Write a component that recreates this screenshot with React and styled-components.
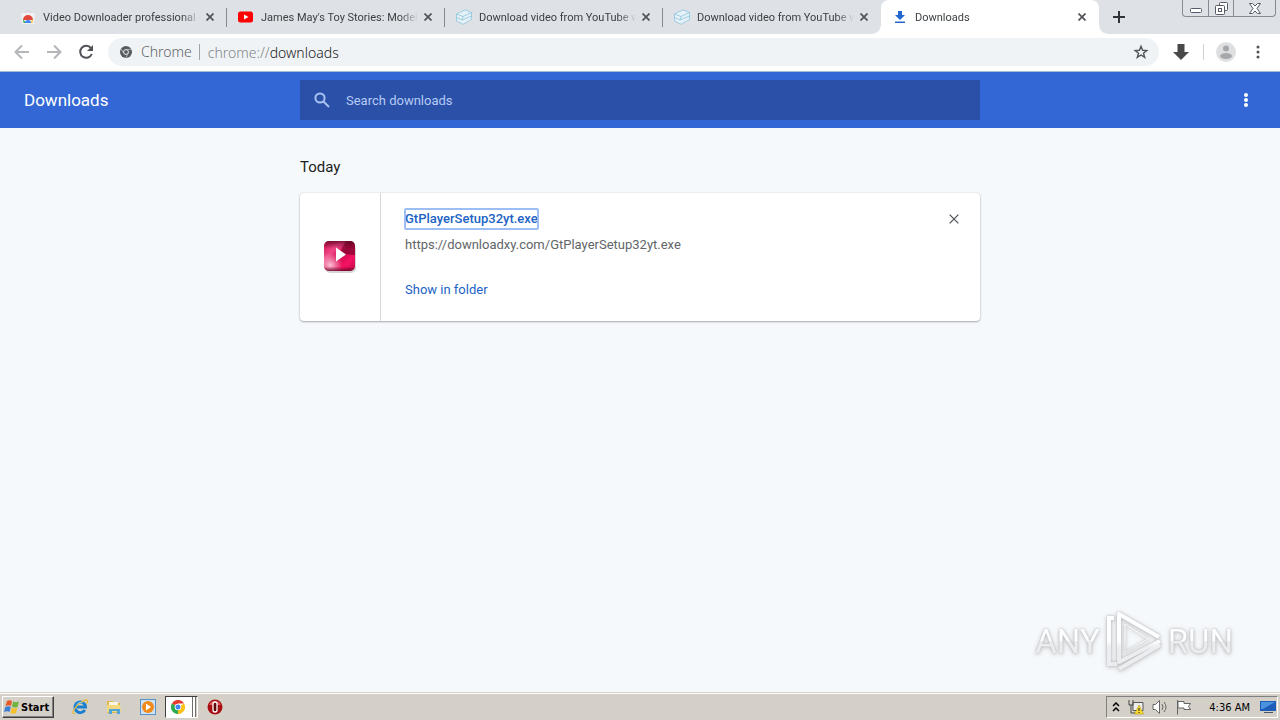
import React from 'react';
import styled, { createGlobalStyle, css } from 'styled-components';

// STYLES
const GlobalStyle = createGlobalStyle`
	* {
		box-sizing: border-box;
	}

	body {
		margin: 0;
		background: #f6f9fc;
		font-family: Roboto, 'Liberation Sans', sans-serif;
	}

	button,
	input {
		margin: 0;
		padding: 0;
		border: 0;
		background: none;
		color: inherit;
		font: inherit;
	}

	svg {
		display: block;
		flex: none;
	}
`;

const Screen = styled.div`
	display: flex;
	flex-direction: column;
	min-height: 100vh;
`;

// TAB STRIP
const TabStrip = styled.div`
	display: flex;
	height: 34px;
	padding-left: 9px;
	background: #dee1e6;
	font-size: 11px;
`;

const Tab = styled.div`
	position: relative;
	display: flex;
	flex: 0 1 218px;
	align-items: center;
	min-width: 0;
	padding: 0 9px 0 11px;
	color: #3c4043;
	${({ $line }) =>
		$line &&
		css`
			background: linear-gradient(#85888c, #85888c) right 8px / 1px 19px no-repeat;
		`}
	${({ $active }) =>
		$active &&
		css`
			border-radius: 8px 8px 0 0;
			background: #fff;

			/* flared feet of the active tab */
			&::before,
			&::after {
				content: '';
				position: absolute;
				bottom: 0;
				width: 8px;
				height: 8px;
			}

			&::before {
				right: 100%;
				background: radial-gradient(circle at 0 0, transparent 7px, #fff 8px);
			}

			&::after {
				left: 100%;
				background: radial-gradient(circle at 100% 0, transparent 7px, #fff 8px);
			}
		`}
`;

const TabTitle = styled.span`
	flex: 1;
	min-width: 0;
	margin-left: 7px;
	overflow: hidden;
	white-space: nowrap;
	mask-image: linear-gradient(to right, #000 calc(100% - 18px), transparent);
`;

const TabClose = styled.button`
	display: grid;
	place-items: center;
	width: 16px;
	height: 16px;
	margin-left: 2px;
`;

const NewTab = styled.button`
	display: grid;
	place-items: center;
	width: 28px;
	height: 34px;
	margin-left: 6px;
`;

const WindowButtons = styled.div`
	display: flex;
	height: 17px;
	margin: 0 4px 0 auto;
	border: 1px solid #858b94;
	border-top: 0;
	border-radius: 0 0 4px 4px;
`;

const WindowButton = styled.button`
	display: grid;
	place-items: center;
	width: ${({ $wide }) => ($wide ? '42px' : '25px')};

	& + & {
		border-left: 1px solid #858b94;
	}
`;

// TOOLBAR
const Toolbar = styled.div`
	display: flex;
	align-items: center;
	height: 38px;
	padding: 0 6px 1px;
	border-bottom: 1px solid #a3bcd6;
	background: #fff;
`;

const ToolButton = styled.button`
	display: grid;
	place-items: center;
	width: 32px;
	height: 28px;
`;

const AddressBar = styled.div`
	display: flex;
	flex: 1;
	align-items: center;
	height: 28px;
	margin: 0 6px;
	padding: 0 2px 0 12px;
	border-radius: 14px;
	background: #f0f3f5;
	color: #5f6368;
	font-family: 'Noto Sans', sans-serif;
	font-size: 14px;
	font-weight: 300;
`;

const SiteName = styled.span`
	margin-left: 9px;
	padding-right: 7px;
	border-right: 1px solid #a0a4a8;
	line-height: 16px;
`;

const Scheme = styled.label`
	margin-left: 8px;
	color: #80868b;
`;

const AddressInput = styled.input`
	flex: 1;
	min-width: 0;
	color: #202124;
	outline: none;
`;

const ToolDivider = styled.span`
	width: 1px;
	height: 16px;
	margin: 0 6px;
	background: #cfd1d4;
`;

// DOWNLOADS PAGE
const PageHeader = styled.header`
	display: grid;
	grid-template-columns: 1fr minmax(0, 680px) 1fr;
	align-items: center;
	height: 56px;
	background: #3367d6;
	color: #fff;
`;

const PageTitle = styled.h1`
	margin: 0 0 0 24px;
	font-size: 17px;
	font-weight: 400;
`;

const SearchField = styled.label`
	display: flex;
	align-items: center;
	height: 40px;
	padding: 0 14px;
	background: #2a50a8;
	color: #b6cbf5;
	font-size: 13px;
`;

const SearchInput = styled.input`
	flex: 1;
	min-width: 0;
	margin-left: 16px;
	outline: none;

	&::placeholder {
		color: #b6cbf5;
		opacity: 1;
	}
`;

const MenuButton = styled.button`
	display: grid;
	place-items: center;
	justify-self: end;
	width: 36px;
	height: 36px;
	margin-right: 16px;
`;

const Main = styled.main`
	flex: 1;
	width: 100%;
	max-width: 680px;
	margin: 0 auto;
	padding-top: 27px;
`;

const DateHeading = styled.h2`
	margin: 0 0 14px;
	color: #1c1e21;
	font-size: 15px;
	font-weight: 400;
	line-height: 24px;
`;

const Card = styled.article`
	display: flex;
	border-radius: 4px;
	background: #fff;
	box-shadow: 0 1px 2px rgba(60, 64, 67, 0.4), 0 0 2px rgba(60, 64, 67, 0.16);
	font-size: 13px;
	line-height: 20px;
`;

const CardIcon = styled.div`
	display: grid;
	place-items: center;
	width: 81px;
	border-right: 1px solid #d5d7da;
`;

const CardBody = styled.div`
	flex: 1;
	min-width: 0;
	padding: 16px 24px 21px;
`;

const FileName = styled.a`
	display: table;
	border-radius: 1px;
	outline: 2px solid #9dbdf5;
	outline-offset: -1px;
	color: #2163c4;
	font-weight: 500;
	text-decoration: none;
`;

const FileUrl = styled.a`
	display: table;
	margin-top: 6px;
	color: #616568;
	text-decoration: none;
`;

const ShowButton = styled.button`
	display: block;
	margin-top: 25px;
	color: #2163c4;
`;

const RemoveButton = styled.button`
	display: grid;
	place-items: center;
	width: 20px;
	height: 20px;
	margin: 16px 16px 0 0;
`;

// lies over the page, above the taskbar
const Watermark = styled.div`
	position: fixed;
	right: 47px;
	bottom: 48px;
	display: flex;
	align-items: center;
	gap: 5px;
	font-size: 33px;
	opacity: 0.8;
	filter: drop-shadow(0 0 1px #aaa) drop-shadow(0 1px 2px #bbb);
	pointer-events: none;
`;

const WatermarkText = styled.span`
	background: linear-gradient(#fff 50%, #e9ebed 50%);
	background-clip: text;
	color: transparent;
`;

// TASKBAR
const Taskbar = styled.footer`
	display: flex;
	align-items: center;
	height: 28px;
	padding: 2px 2px 1px;
	border-top: 1px solid #d4d0c8;
	background: #d4d0c8;
	box-shadow: inset 0 1px #fff;
	font-family: 'DejaVu Sans Condensed', 'DejaVu Sans', sans-serif;
	font-size: 11px;
`;

const StartButton = styled.button`
	display: flex;
	align-items: center;
	gap: 1px;
	height: 22px;
	margin-right: 9px;
	padding: 0 4px 0 1px;
	border: 1px solid;
	border-color: #fff #404040 #404040 #fff;
	box-shadow: inset -1px -1px #808080;
	font-weight: 700;
`;

const TaskButton = styled.button`
	display: grid;
	place-items: center;
	width: 34px;
	height: 22px;
`;

const TaskGroup = styled.div`
	display: flex;
	height: 22px;
	padding-right: 1px;
	border: 1px solid;
	border-color: #404040 #fff #fff #404040;
`;

const GroupButton = styled.button`
	display: grid;
	place-items: center;
	width: 24px;
	background: #fff;
`;

const GroupEdge = styled.span`
	width: 3px;
	border-right: 1px solid #706e6a;
	background: #fff;
`;

const Tray = styled.div`
	display: flex;
	align-items: center;
	gap: 8px;
	height: 22px;
	margin-left: auto;
	padding: 0 1px 0 5px;
	border: 1px solid;
	border-color: #808080 #fff #fff #808080;
`;

const Clock = styled.time`
	margin: 0 2px 0 9px;
`;

// ICONS
const Cross = ({ size = 8, color = '#505357', width = 1.7 }) => (
	<svg width={size} height={size} viewBox="0 0 8 8" stroke={color} strokeWidth={width}>
		<path d="M.5.5l7 7M7.5.5l-7 7" />
	</svg>
);

const Dots = ({ color, r }) => (
	<svg width="16" height="16" viewBox="0 0 16 16" fill={color}>
		<circle cx="8" cy="3" r={r} />
		<circle cx="8" cy="8" r={r} />
		<circle cx="8" cy="13" r={r} />
	</svg>
);

const StoreIcon = () => (
	<svg width="16" height="16" viewBox="0 0 16 16">
		<path d="M1 4h14l-1 11H2z" fill="#f1f1f1" />
		<path d="M5 4c0-3 6-3 6 0" fill="none" stroke="#d8d8d8" />
		<path d="M3 11a5 5 0 0 1 10 0l-5 0z" fill="#e2463b" />
		<path d="M3 10l3 4H3.500z" fill="#3aa757" />
		<path d="M13 10l-3 4h2.500z" fill="#f6c32c" />
		<path d="M5 14a3 3 0 0 1 6 0z" fill="#4285f4" />
	</svg>
);

const YoutubeIcon = () => (
	<svg width="16" height="16" viewBox="0 0 16 16">
		<rect x="0" y="2.500" width="15" height="11" rx="2.500" fill="#f00" />
		<path d="M6 5.500l4.500 2.500L6 10.500z" fill="#fff" />
	</svg>
);

const BoxIcon = () => (
	<svg width="16" height="16" viewBox="0 0 16 16" fill="#e6f1f7" stroke="#8cc5dd" strokeWidth=".8" strokeLinejoin="round">
		<path d="M.5 5L9 .8l6.500 2.700v7L7 15.300.5 12z" />
		<path d="M.5 5L7 7.500l8.500-4M7 7.500L6 11l-5.500-2.500M6 11l9.500-4" fill="none" />
	</svg>
);

const DownloadIcon = () => (
	<svg width="16" height="16" viewBox="0 0 16 16" fill="#2467cf">
		<path d="M6 2h4v4h3l-5 5-5-5h3zM3 12.500h10V14H3z" />
	</svg>
);

const ArrowIcon = ({ flip }) => (
	<svg width="16" height="16" viewBox="0 0 16 16" fill="none" stroke="#b4b6b9" strokeWidth="2">
		<path d={flip ? 'M1 8h13M8 1.500L14.500 8 8 14.500' : 'M15 8H2M8 1.500L1.500 8 8 14.500'} />
	</svg>
);

const ReloadIcon = () => (
	<svg width="16" height="16" viewBox="0 0 16 16">
		<path d="M13 4.200A6 6 0 1 0 13.800 10" fill="none" stroke="#505357" strokeWidth="2" />
		<path d="M15 1v6H9z" fill="#505357" />
	</svg>
);

const ChromeMono = () => (
	<svg width="12" height="12" viewBox="0 0 12 12">
		<circle cx="6" cy="6" r="6" fill="#56595d" />
		<circle cx="6" cy="6" r="2.400" fill="#56595d" stroke="#f0f3f5" />
		<path d="M6 3.400h5.200M3.700 7.300L1.200 3M8.300 7.300L5.800 11.800" stroke="#c5c8cb" strokeWidth=".8" />
	</svg>
);

const StarIcon = () => (
	<svg width="16" height="16" viewBox="0 0 16 16" fill="none" stroke="#505357" strokeWidth="1.400">
		<path d="M8 2.300l1.600 4 4.200.2-3.300 2.700 1.200 4.200L8 11l-3.700 2.400 1.200-4.200-3.300-2.700 4.200-.2z" />
	</svg>
);

const GtPlayerIcon = () => (
	<svg width="32" height="32" viewBox="0 0 32 32">
		<defs>
			<linearGradient id="gtBase" x1="0" y1="0" x2="1" y2="1">
				<stop offset="0" stopColor="#d00c4c" />
				<stop offset=".3" stopColor="#f0498a" />
				<stop offset=".5" stopColor="#d3094c" />
				<stop offset=".75" stopColor="#f41264" />
				<stop offset="1" stopColor="#c20a46" />
			</linearGradient>
			<radialGradient id="gtGlow" cx=".2" cy=".8" r=".4">
				<stop offset="0" stopColor="#ffc0d8" />
				<stop offset="1" stopColor="#ffc0d8" stopOpacity="0" />
			</radialGradient>
			<linearGradient id="gtShade" x1="0" y1="0" x2="0" y2="1">
				<stop offset="0" stopColor="#50001c" stopOpacity=".7" />
				<stop offset=".25" stopColor="#50001c" stopOpacity="0" />
				<stop offset=".85" stopColor="#50001c" stopOpacity="0" />
				<stop offset="1" stopColor="#50001c" stopOpacity=".7" />
			</linearGradient>
		</defs>
		<rect x="1" y="3" width="31" height="29" rx="5" fill="#bbb" opacity=".6" />
		<rect width="31" height="30" rx="5" fill="url(#gtBase)" />
		<path d="M15 13L22 0h4a5 5 0 0 1 5 5v9z" fill="#78042d" opacity=".65" />
		<rect width="31" height="30" rx="5" fill="url(#gtGlow)" />
		<rect width="31" height="30" rx="5" fill="url(#gtShade)" />
		<path d="M12 6.500L22 13.500 12 20.500z" fill="#fff" />
	</svg>
);

const AnyRunMark = () => (
	<svg width="58" height="62" viewBox="0 0 58 62" fill="none" stroke="url(#markShade)">
		<defs>
			<linearGradient id="markShade" gradientUnits="userSpaceOnUse" x1="0" y1="0" x2="0" y2="62">
				<stop offset="0" stopColor="#fff" />
				<stop offset=".5" stopColor="#fff" />
				<stop offset=".6" stopColor="#e9ebed" />
				<stop offset="1" stopColor="#e9ebed" />
			</linearGradient>
		</defs>
		<path d="M9 8H4v46h8" strokeWidth="4" />
		<path d="M54 27L14 4v48l41-21M14 59l41-24" strokeWidth="4" strokeLinejoin="round" />
		<path d="M20 14v28l23-13z" strokeWidth="1" />
	</svg>
);

const WindowsFlag = () => (
	<svg width="16" height="16" viewBox="0 0 16 16">
		<path d="M3 2c2-1 3-1 5 0L7 7C5 6 4 6 1.500 7z" fill="#e8592a" />
		<path d="M9 2.500c2 1 4 1 6 0L13.500 8c-2 .8-4 .6-5.500-.2z" fill="#6fb43f" />
		<path d="M1.300 8c2-1 4-1 5.500 0l-1.300 5C4 12 2 12 0 13z" fill="#3c7fd0" />
		<path d="M7.800 8.700c2 1 3.500 1 5.500.1L12 14c-2 1-4 .8-5.500-.2z" fill="#f5bf2b" />
	</svg>
);

const ExplorerIcon = () => (
	<svg width="16" height="16" viewBox="0 0 16 16" fill="none">
		<path d="M12.800 11A5.300 5.300 0 1 1 13.500 8H5" stroke="#1b7fd0" strokeWidth="3" />
		<path d="M3 14.500C-1 16 1 9 8 4s9-3 6.500.5" stroke="#e5b93c" strokeWidth="1.300" />
		<path d="M4.500 5.500a4.500 4.500 0 0 1 6-1.500" stroke="#7cc9f5" />
	</svg>
);

const FolderIcon = () => (
	<svg width="16" height="16" viewBox="0 0 16 16">
		<path d="M1 2h6l1 2h6v10H1z" fill="#dcb94f" />
		<path d="M3 3h9v6H3z" fill="#f8f4dd" />
		<path d="M1 6h13l1 7H1z" fill="#f2d97f" />
		<path d="M3 15v-5h11v5h-3v-3H6v3z" fill="#4fa5d8" />
	</svg>
);

const MediaIcon = () => (
	<svg width="16" height="16" viewBox="0 0 16 16">
		<rect x=".5" y=".5" width="15" height="15" fill="#cfe3f5" stroke="#5792cb" />
		<circle cx="8" cy="8" r="6" fill="#f08a1c" />
		<path d="M6 4.500l5 3.500-5 3.500z" fill="#fff" />
	</svg>
);

const ChromeIcon = () => (
	<svg width="14" height="14" viewBox="0 0 14 14">
		<path d="M7 7L.9 3.500A7 7 0 0 1 13.100 3.500H7z" fill="#e33b2e" />
		<path d="M7 7l6.100-3.500A7 7 0 0 1 7 14z" fill="#fbc116" />
		<path d="M7 7v7A7 7 0 0 1 .9 3.500z" fill="#2da94f" />
		<circle cx="7" cy="7" r="3.300" fill="#fff" />
		<circle cx="7" cy="7" r="2.500" fill="#4285f4" />
	</svg>
);

const OperaIcon = () => (
	<svg width="16" height="16" viewBox="0 0 16 16">
		<circle cx="8" cy="8" r="7.500" fill="#a80f14" />
		<path d="M2 6a6.500 6.500 0 0 1 12 0z" fill="#d9595a" />
		<rect x="6" y="3" width="4" height="10" rx="2" fill="#5d0508" stroke="#fff" strokeWidth="1.300" />
	</svg>
);

const NetworkIcon = () => (
	<svg width="16" height="16" viewBox="0 0 16 16">
		<path d="M5 3.500h10v8H5z" fill="#eee" stroke="#555" />
		<path d="M1 1v5h4V1M3 6v8h4" fill="none" stroke="#444" />
		<path d="M11 6l4.500 9h-9z" fill="#fadb2e" stroke="#a88b00" strokeWidth=".5" />
		<path d="M11 9v3M11 13v1" stroke="#222" />
	</svg>
);

const SoundIcon = () => (
	<svg width="16" height="16" viewBox="0 0 16 16" fill="none" stroke="#666">
		<path d="M1 5.500h2.500l4-4v13l-4-4H1z" fill="#fff" />
		<path d="M10 5q2 3 0 6M12 3q4 5 0 10" />
	</svg>
);

const FlagIcon = () => (
	<svg width="16" height="16" viewBox="0 0 16 16" stroke="#666">
		<path d="M1.500 1v14.500" fill="none" />
		<path d="M2 2.500h6v2h6.500l-2 3 2 3H8V9H2z" fill="#fff" />
	</svg>
);

const tabs = [
	{ title: 'Video Downloader professional -', icon: StoreIcon, line: true },
	{ title: "James May's Toy Stories: Model", icon: YoutubeIcon, line: true },
	{ title: 'Download video from YouTube w', icon: BoxIcon, line: true },
	{ title: 'Download video from YouTube w', icon: BoxIcon },
	{ title: 'Downloads', icon: DownloadIcon, active: true },
];

const launchers = [
	{ name: 'Internet Explorer', icon: ExplorerIcon },
	{ name: 'Windows Explorer', icon: FolderIcon },
	{ name: 'Media Player', icon: MediaIcon },
];

const App = () => {
	return (
		<Screen>
			<GlobalStyle />
			<TabStrip>
				{tabs.map(({ title, icon: Icon, line, active }, index) => (
					<Tab key={index} $line={line} $active={active}>
						<Icon />
						<TabTitle>{title}</TabTitle>
						<TabClose aria-label="Close tab">
							<Cross />
						</TabClose>
					</Tab>
				))}
				<NewTab aria-label="New tab">
					<svg width="12" height="12" viewBox="0 0 12 12" stroke="#303338" strokeWidth="2">
						<path d="M6 0v12M0 6h12" />
					</svg>
				</NewTab>
				<WindowButtons>
					<WindowButton aria-label="Minimize">
						<svg width="12" height="12" viewBox="0 0 12 12" fill="#fff" stroke="#555b66">
							<rect x=".5" y="6.500" width="11" height="4" rx="1" />
						</svg>
					</WindowButton>
					<WindowButton aria-label="Restore">
						<svg width="13" height="13" viewBox="0 0 13 13" fill="#fff" stroke="#555b66">
							<rect x="4.500" y=".5" width="8" height="8" rx="1" />
							<rect x=".5" y="3.500" width="9" height="9" rx="1" />
							<rect x="3.500" y="6.500" width="3" height="3" />
						</svg>
					</WindowButton>
					<WindowButton $wide aria-label="Close">
						<svg width="12" height="11" viewBox="0 0 12 11" fill="#fff" stroke="#555b66">
							<path d="M.5.5h3L6 3 8.500.5h3L8 5.500l3.500 5h-3L6 8l-2.500 2.500h-3L4 5.500z" />
						</svg>
					</WindowButton>
				</WindowButtons>
			</TabStrip>

			<Toolbar>
				<ToolButton aria-label="Back">
					<ArrowIcon />
				</ToolButton>
				<ToolButton aria-label="Forward">
					<ArrowIcon flip />
				</ToolButton>
				<ToolButton aria-label="Reload">
					<ReloadIcon />
				</ToolButton>
				<AddressBar>
					<ChromeMono />
					<SiteName>Chrome</SiteName>
					<Scheme htmlFor="address">chrome://</Scheme>
					<AddressInput id="address" defaultValue="downloads" />
					<ToolButton aria-label="Bookmark this page">
						<StarIcon />
					</ToolButton>
				</AddressBar>
				<ToolButton aria-label="Video downloader">
					<svg width="16" height="16" viewBox="0 0 16 16" fill="#484848">
						<path d="M4.500 0h7v8H16l-8 8-8-8h4.500z" />
					</svg>
				</ToolButton>
				<ToolDivider />
				<ToolButton aria-label="Profile">
					<svg width="20" height="20" viewBox="0 0 20 20">
						<circle cx="10" cy="10" r="10" fill="#dedfe1" />
						<circle cx="10" cy="6.500" r="3" fill="#a5a7aa" />
						<ellipse cx="10" cy="14" rx="6" ry="3" fill="#a5a7aa" />
					</svg>
				</ToolButton>
				<ToolButton aria-label="Chrome menu">
					<Dots color="#505357" r={1.5} />
				</ToolButton>
			</Toolbar>

			<PageHeader>
				<PageTitle>Downloads</PageTitle>
				<SearchField>
					<svg width="16" height="16" viewBox="0 0 16 16" fill="none" stroke="#a9c2f3" strokeWidth="2">
						<circle cx="6" cy="6" r="4.600" />
						<path d="M9.500 9.500l5.500 5.500" />
					</svg>
					<SearchInput type="search" placeholder="Search downloads" aria-label="Search downloads" />
				</SearchField>
				<MenuButton aria-label="More actions">
					<Dots color="#fff" r={2} />
				</MenuButton>
			</PageHeader>

			<Main>
				<DateHeading>Today</DateHeading>
				<Card>
					<CardIcon>
						<GtPlayerIcon />
					</CardIcon>
					<CardBody>
						<FileName href="#file">GtPlayerSetup32yt.exe</FileName>
						<FileUrl href="#source">https://downloadxy.com/GtPlayerSetup32yt.exe</FileUrl>
						<ShowButton>Show in folder</ShowButton>
					</CardBody>
					<RemoveButton aria-label="Remove from list">
						<Cross size={10} width={1} />
					</RemoveButton>
				</Card>
			</Main>

			<Watermark>
				<WatermarkText>ANY</WatermarkText>
				<AnyRunMark />
				<WatermarkText>RUN</WatermarkText>
			</Watermark>

			<Taskbar>
				<StartButton>
					<WindowsFlag />
					Start
				</StartButton>
				{launchers.map(({ name, icon: Icon }) => (
					<TaskButton key={name} aria-label={name}>
						<Icon />
					</TaskButton>
				))}
				<TaskGroup>
					<GroupButton aria-label="Google Chrome">
						<ChromeIcon />
					</GroupButton>
					<GroupEdge />
					<GroupEdge />
				</TaskGroup>
				<TaskButton aria-label="Opera">
					<OperaIcon />
				</TaskButton>
				<Tray>
					<svg width="8" height="10" viewBox="0 0 8 10" fill="none" stroke="#000" strokeWidth="1.500">
						<path d="M1 4l3-3 3 3M1 9l3-3 3 3" />
					</svg>
					<NetworkIcon />
					<SoundIcon />
					<FlagIcon />
					<Clock>4:36 AM</Clock>
					<svg width="16" height="16" viewBox="0 0 16 16">
						<path d="M0 2h16v10H0z" fill="#1d5cb8" />
						<path d="M1 3h14L3 10H1z" fill="#4a93de" />
						<path d="M4 13h9v1H4z" fill="#456" />
					</svg>
				</Tray>
			</Taskbar>
		</Screen>
	);
};

export default App;
